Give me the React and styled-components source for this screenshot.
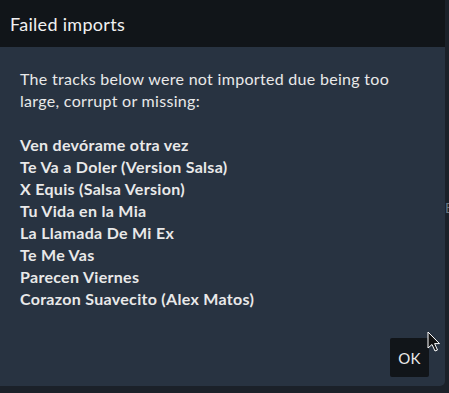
import React from 'react';
import styled, { createGlobalStyle } from 'styled-components';

const GlobalStyle = createGlobalStyle`
html, body {
margin: 0;
padding: 0;
background-color: #161b21;
}
body {
font-family: 'Lato', 'Noto Sans', sans-serif;
}
`;

const tracks = [
    'Ven devórame otra vez',
    'Te Va a Doler (Version Salsa)',
    'X Equis (Salsa Version)',
    'Tu Vida en la Mia',
    'La Llamada De Mi Ex',
    'Te Me Vas',
    'Parecen Viernes',
    'Corazon Suavecito (Alex Matos)',
];

const Cursor = () => (
    <CursorBox viewBox="0 0 14 22" width="14" height="22">
        <path d="M1 1 L1 17 L5 13.5 L8 20 L10.5 19 L7.6 12.6 L12.5 12.6 Z"
            fill="#111" stroke="#fff" strokeWidth="1" strokeLinejoin="round" />
    </CursorBox>
);

const App = () => {
    return (
        <Page>
            <GlobalStyle />
            <Modal>
                <Header>
                    <Title>Failed imports</Title>
                </Header>
                <Body>
                    <Text>The tracks below were not imported due being too large, corrupt or missing:</Text>
                    <List>
                        {tracks.map((t) => (
                            <Track key={t}>{t}</Track>
                        ))}
                    </List>
                </Body>
                <Footer>
                    <OkButton>OK</OkButton>
                </Footer>
            </Modal>
            <EdgeGlyph>E</EdgeGlyph>
            <Cursor />
        </Page>
    );
};

export default App;

const Page = styled.div`
position: relative;
width: 449px;
height: 393px;
overflow: hidden;
background-color: #1b2129;
`;

const Modal = styled.div`
width: 445px;
height: 386px;
display: flex;
flex-direction: column;
background-color: #283341;
border-radius: 0 0 5px 0;
overflow: hidden;
`;

const Header = styled.div`
height: 47px;
display: flex;
align-items: center;
padding: 0 10px;
background-color: #111519;
`;

const Title = styled.h5`
margin: 0;
font-size: 18px;
font-weight: 400;
letter-spacing: 0.3px;
color: #f1f1f1;
`;

const Body = styled.div`
flex: 1;
padding: 21px 20px 0 20px;
color: #e9e9e9;
font-size: 16px;
line-height: 22px;
letter-spacing: 0.3px;
`;

const Text = styled.p`
margin: 0 0 22px 0;
`;

const List = styled.div`
display: flex;
flex-direction: column;
`;

const Track = styled.div`
font-weight: 700;
`;

const Footer = styled.div`
display: flex;
justify-content: flex-end;
padding: 0 16px 9px 0;
`;

const OkButton = styled.button`
width: 39px;
height: 39px;
padding: 0;
border: none;
border-radius: 2px;
background-color: #111519;
color: #e9e9e9;
font-family: inherit;
font-size: 15px;
letter-spacing: 0.3px;
`;

const EdgeGlyph = styled.span`
position: absolute;
left: 445px;
top: 200px;
font-size: 14px;
line-height: 16px;
color: #6b7480;
`;

const CursorBox = styled.svg`
position: absolute;
left: 427px;
top: 331px;
`;
